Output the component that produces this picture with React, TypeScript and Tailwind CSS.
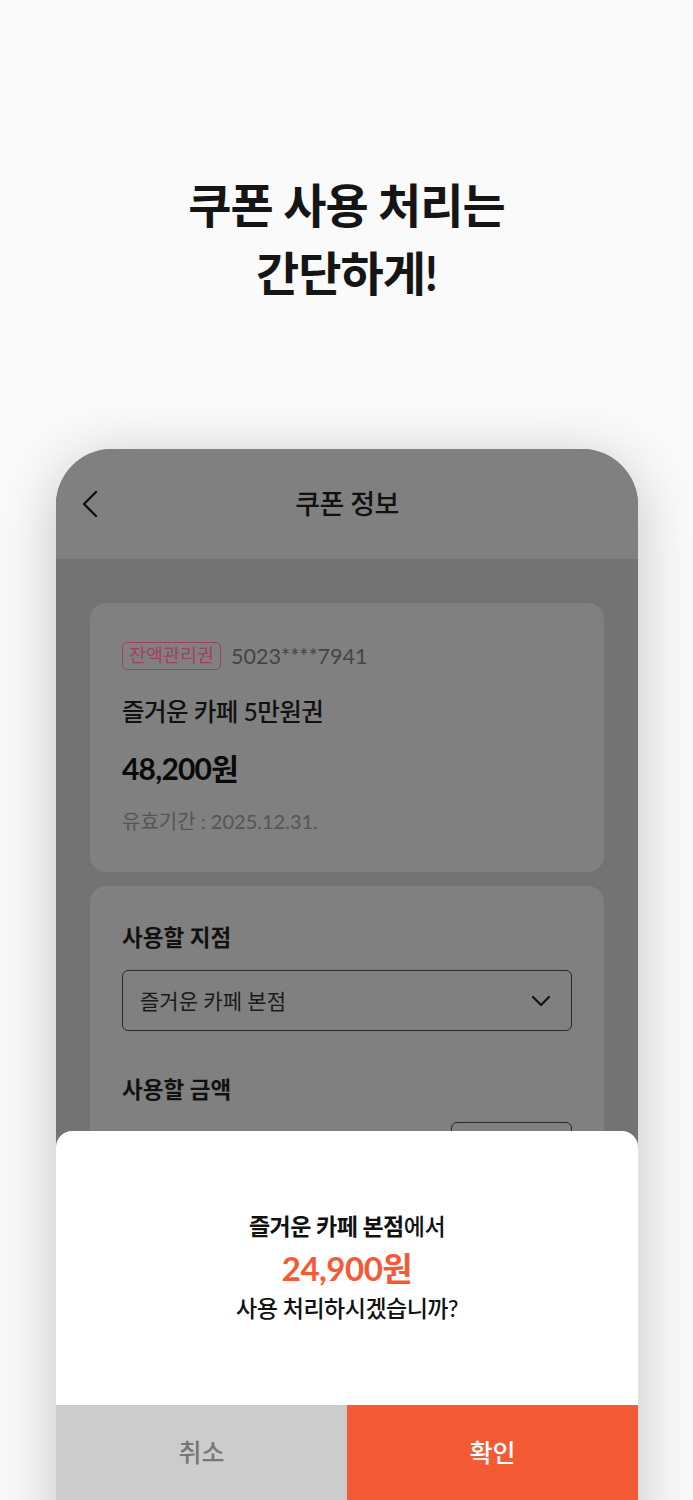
export default function App() {
  const font = { fontFamily: "Lato, 'Noto Sans CJK KR', sans-serif" };
  return (
    <div className="h-[1500px] overflow-hidden bg-[#fafafa]" style={font}>
      {/* 상단 카피 */}
      <div className="pt-[171px] text-center text-[47px] leading-[68px] font-bold text-[#151515] tracking-[-1px]">
        <p>쿠폰 사용 처리는</p>
        <p>간단하게!</p>
      </div>

      {/* 폰 목업 */}
      <div className="relative ml-[56px] mt-[142px] h-[1100px] w-[582px] rounded-t-[56px] bg-[#737373] shadow-[0_10px_60px_rgba(0,0,0,0.22)] overflow-hidden">
        <div className="relative flex h-[110px] items-center justify-center bg-[#808080]">
          <svg
            className="absolute left-[26px] top-[41px]"
            width="16"
            height="28"
            viewBox="0 0 16 28"
            fill="none"
          >
            <path
              d="M14 2L2 14L14 26"
              stroke="#111"
              strokeWidth="2.4"
              strokeLinecap="round"
              strokeLinejoin="round"
            />
          </svg>
          <h1 className="text-[27px] font-medium text-[#111] tracking-[-0.5px]">
            쿠폰 정보
          </h1>
        </div>

        <div className="px-[34px] pt-[44px] flex flex-col gap-[14px]">
          {/* 쿠폰 카드 */}
          <div className="rounded-[16px] bg-[#808080] px-[32px] pt-[39px] pb-[37px]">
            <div className="flex h-[28px] items-center gap-[10px]">
              <span className="flex h-[28px] items-center rounded-[5px] border-[1.5px] border-[#a3405f] px-[6px] text-[18.5px] text-[#a3405f]">
                잔액관리권
              </span>
              <span className="text-[21.5px] text-[#454545]">5023****7941</span>
            </div>
            <p className="mt-[25px] text-[24.5px] leading-[34px] font-medium text-[#111] tracking-[-0.5px]">
              즐거운 카페 5만원권
            </p>
            <p className="mt-[19px] text-[30px] leading-[40px] font-bold text-[#0a0a0a] tracking-[-0.8px]">
              48,200원
            </p>
            <p className="mt-[19px] text-[20px] leading-[28px] text-[#555]">
              유효기간 : 2025.12.31.
            </p>
          </div>

          {/* 사용 정보 */}
          <div className="rounded-[16px] bg-[#808080] px-[32px] pt-[36px] pb-[40px]">
            <p className="text-[22.5px] leading-[32px] font-semibold text-[#111]">
              사용할 지점
            </p>
            <div className="mt-[16px] flex h-[61px] items-center justify-between rounded-[6px] border-[1.5px] border-[#2a2a2a] pl-[17px] pr-[20px]">
              <span className="text-[21px] text-[#1a1a1a]">즐거운 카페 본점</span>
              <svg width="20" height="12" viewBox="0 0 20 12" fill="none">
                <path
                  d="M2 2L10 10L18 2"
                  stroke="#111"
                  strokeWidth="2.2"
                  strokeLinecap="round"
                  strokeLinejoin="round"
                />
              </svg>
            </div>
            <p className="mt-[43px] text-[22.5px] leading-[32px] font-semibold text-[#111]">
              사용할 금액
            </p>
            <div className="mt-[16px] flex justify-end">
              <div className="h-[61px] w-[121px] rounded-[6px] border-[1.5px] border-[#2a2a2a]" />
            </div>
          </div>
        </div>

        {/* 확인 바텀시트 */}
        <div className="absolute left-0 right-0 top-[682px] flex h-[369px] flex-col rounded-t-[16px] bg-white">
          <div className="flex h-[274px] flex-col items-center pt-[79px] text-center">
            <p className="text-[23px] leading-[32px] text-[#111] tracking-[-0.5px]">
              <span className="font-bold">즐거운 카페 본점</span>
              <span className="font-medium">에서</span>
            </p>
            <p className="mt-[4px] text-[33px] leading-[44px] font-bold text-[#f55a36] tracking-[-0.5px]">
              24,900원
            </p>
            <p className="mt-[2px] text-[23px] leading-[32px] font-medium text-[#111] tracking-[-0.5px]">
              사용 처리하시겠습니까?
            </p>
          </div>
          <div className="flex h-[95px]">
            <button className="flex flex-1 items-center justify-center bg-[#cccccc] text-[25px] font-medium text-[#777]">
              취소
            </button>
            <button className="flex flex-1 items-center justify-center bg-[#f55a36] text-[25px] font-medium text-white">
              확인
            </button>
          </div>
        </div>
      </div>
    </div>
  );
}
